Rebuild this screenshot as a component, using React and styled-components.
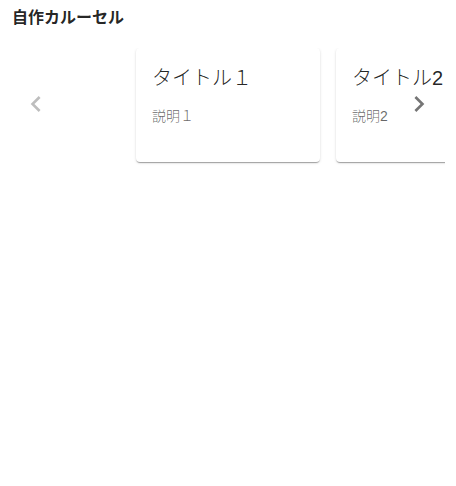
import React from 'react'
import styled, { createGlobalStyle } from 'styled-components'

const GlobalStyle = createGlobalStyle`
  body {
    margin: 0;
    background: #fff;
    font-family: "Liberation Sans", "Noto Sans CJK JP", sans-serif;
    color: rgba(0, 0, 0, 0.87);
  }
`

const Page = styled.div`
  padding: 4px 11px 0 12px;
`

const Heading = styled.h2`
  margin: 0;
  font-size: 16px;
  line-height: 28px;
  font-weight: 700;
`

const Carousel = styled.div`
  position: relative;
  margin-top: 16px;
`

const Viewport = styled.div`
  overflow: hidden;
`

const Track = styled.div`
  display: flex;
  gap: 16px;
  padding: 0 0 4px 124px;
`

const Card = styled.div`
  flex: 0 0 184px;
  height: 114px;
  box-sizing: border-box;
  padding: 14px 16px 16px;
  border-radius: 4px;
  background: #fff;
  box-shadow: 0px 2px 1px -1px rgba(0, 0, 0, 0.2),
    0px 1px 1px 0px rgba(0, 0, 0, 0.14),
    0px 1px 3px 0px rgba(0, 0, 0, 0.12);
`

const CardTitle = styled.div`
  font-size: 20px;
  line-height: 32px;
  font-weight: 300;
  margin-bottom: 12px;
  white-space: nowrap;
`

const CardText = styled.div`
  font-size: 14px;
  line-height: 20px;
  font-weight: 300;
  color: rgba(0, 0, 0, 0.6);
`

const Arrow = styled.button`
  position: absolute;
  top: 40px;
  ${p => (p.$side === 'left' ? 'left: 8px;' : 'right: 10px;')}
  width: 32px;
  height: 32px;
  padding: 0;
  border: 0;
  background: transparent;
  color: ${p => (p.disabled ? 'rgba(0, 0, 0, 0.26)' : 'rgba(0, 0, 0, 0.54)')};
  cursor: pointer;

  svg {
    display: block;
    width: 32px;
    height: 32px;
    fill: currentColor;
  }
`

const items = [
  { id: 1, title: 'タイトル１', text: '説明１' },
  { id: 2, title: 'タイトル2', text: '説明2' },
  { id: 3, title: 'タイトル3', text: '説明3' }
]

export default function App() {
  return (
    <>
      <GlobalStyle />
      <Page>
        <Heading>自作カルーセル</Heading>
        <Carousel>
          <Viewport>
            <Track>
              {items.map(item => (
                <Card key={item.id}>
                  <CardTitle>{item.title}</CardTitle>
                  <CardText>{item.text}</CardText>
                </Card>
              ))}
            </Track>
          </Viewport>
          <Arrow $side="left" disabled aria-label="前へ">
            <svg viewBox="0 0 24 24"><path d="M15.41 7.41 14 6l-6 6 6 6 1.41-1.41L10.83 12z" /></svg>
          </Arrow>
          <Arrow $side="right" aria-label="次へ">
            <svg viewBox="0 0 24 24"><path d="M10 6 8.59 7.41 13.17 12l-4.58 4.59L10 18l6-6z" /></svg>
          </Arrow>
        </Carousel>
      </Page>
    </>
  )
}
